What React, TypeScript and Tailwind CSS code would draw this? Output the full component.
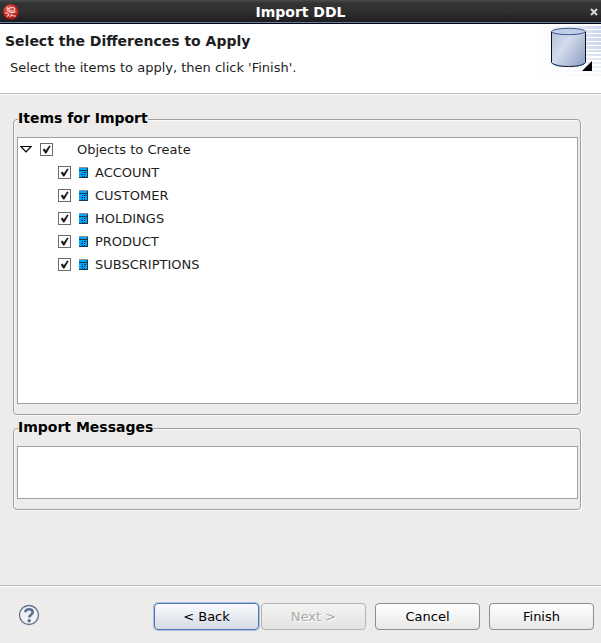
import React from "react";

const tables = ["ACCOUNT", "CUSTOMER", "HOLDINGS", "PRODUCT", "SUBSCRIPTIONS"];

function AppIcon() {
  return (
    <svg width="16" height="16" viewBox="0 0 16 16" aria-hidden="true">
      <defs>
        <radialGradient id="ball" cx="0.35" cy="0.3" r="0.8">
          <stop offset="0" stopColor="#ee6a62" />
          <stop offset="0.5" stopColor="#cf2b25" />
          <stop offset="1" stopColor="#8e120f" />
        </radialGradient>
      </defs>
      <circle cx="8" cy="8" r="7.8" fill="url(#ball)" />
      <g fill="none" stroke="#f6d5d2" strokeWidth="1.1">
        <path d="M3.500 3.500 5.500 5l2-1.500h3l1.500 1.500-1 2H5.500L4 5.500" />
        <path d="M6 7.500 9.500 9l1.500-1h2.500M2 9h2.500L6 11l-2 1.500M7 13l1.500-2 2 1h2.500" />
      </g>
    </svg>
  );
}

function DatabaseBanner() {
  const stripes = Array.from({ length: 13 }, (_, i) => 2 + i * 4);
  return (
    <svg width="66" height="69" viewBox="0 0 66 69" aria-hidden="true">
      <defs>
        <linearGradient id="fade" gradientUnits="userSpaceOnUse" x1="6" y1="0" x2="66" y2="0">
          <stop offset="0" stopColor="#cdd8ee" stopOpacity="0" />
          <stop offset="0.4" stopColor="#cdd8ee" stopOpacity="0.4" />
          <stop offset="1" stopColor="#c6d2ea" />
        </linearGradient>
        <linearGradient id="can" x1="0" y1="0" x2="1" y2="0.7">
          <stop offset="0" stopColor="#b4c0d8" />
          <stop offset="0.45" stopColor="#d3dcec" />
          <stop offset="1" stopColor="#98a8c8" />
        </linearGradient>
      </defs>
      {stripes.map((y, i) => (
        <rect
          key={y}
          x="6"
          y={y}
          width="60"
          height={i < 6 ? 3 : 2}
          fill="url(#fade)"
          opacity={i < 6 ? 0.9 : 0.9 - (i - 5) * 0.1}
        />
      ))}
      <path d="M16.500 7.500v31c1 2 7 4 17 4s16-2 17-4v-31z" fill="url(#can)" stroke="#0b1020" />
      <path d="M16.500 38.500c1 2 7 4 17 4s16-2 17-4" fill="none" stroke="#2f4e8c" strokeDasharray="10 16" />
      <ellipse cx="33.500" cy="7.500" rx="17" ry="3.200" fill="#c0cee3" stroke="#3a5890" />
      <path d="M57 37v10H47z" fill="#000" />
    </svg>
  );
}

function TableIcon() {
  return (
    <svg width="9" height="13" viewBox="0 0 9 13" shapeRendering="crispEdges" aria-hidden="true">
      <path d="M0 1h9v11H0z" fill="#00a8fb" />
      <path d="M0 1h9v1H0z" fill="#8c9298" />
      <path d="M0 4h8v1H0zM0 11h9v1H0zM8 2h1v9H8z" fill="#17384f" />
      <path d="M3 6h1v1H3zM5 6h2v1H5zM2 8h2v1H2zM5 8h1v1H5zM3 10h1v1H3zM5 10h1v1H5z" fill="#063452" />
    </svg>
  );
}

function Tick({ label }: { label: string }) {
  return (
    <span className="grid h-[13px] w-[13px] shrink-0">
      <input
        type="checkbox"
        id={label}
        defaultChecked
        className="peer col-start-1 row-start-1 h-[13px] w-[13px] appearance-none border border-[#6c6c6c] bg-white"
      />
      <svg
        viewBox="0 0 13 13"
        className="pointer-events-none invisible col-start-1 row-start-1 h-[13px] w-[13px] peer-checked:visible"
        aria-hidden="true"
      >
        <path d="M3 6.800 4.500 5.800 5.800 7.800 9.300 2.800 10.300 3.200 6.300 10.200H5.300z" fill="#161616" stroke="#161616" strokeWidth="0.500" />
      </svg>
    </span>
  );
}

function Group({ title, children }: { title: string; children: React.ReactNode }) {
  return (
    <fieldset className="min-w-0 rounded-[4px] border border-[#a09f9d] pr-[2px] pb-[10px] pl-[3px] shadow-[1px_1px_0_#fbfbfa,inset_1px_1px_0_#fbfbfa]">
      <legend className="ml-px h-5 bg-[#edeceb] text-[14px] leading-[19px] font-bold text-black">{title}</legend>
      {children}
    </fieldset>
  );
}

const button =
  "h-[27px] w-[105px] rounded-[4px] border text-[13px] leading-4";

export default function App() {
  return (
    <div className="flex min-h-screen flex-col bg-[#edeceb] font-['DejaVu_Sans',sans-serif] text-[13px] text-[#1e1e1e]">
      <div className="flex h-6 items-center border-b border-black bg-[linear-gradient(#4c4c4c_0px,#333_3px,#303030_12px,#1d1d1d_22px,#5c82b5_22px)] px-[3px]">
        <AppIcon />
        <h1 className="flex-1 pr-2 text-center text-[14px] leading-4 font-bold text-white">Import DDL</h1>
        <button type="button" aria-label="Close" className="grid h-4 w-2 place-items-center">
          <svg width="8" height="8" viewBox="0 0 8 8" aria-hidden="true">
            <path d="M1 1l6 6M7 1L1 7" stroke="#d8d8d8" strokeWidth="2" />
          </svg>
        </button>
      </div>

      <header className="flex h-[71px] justify-between border-b border-white bg-white shadow-[inset_0_-1px_0_#bdbcba]">
        <div className="pt-[9px] pl-[5px]">
          <h2 className="text-[14px] leading-4 font-bold">Select the Differences to Apply</h2>
          <p className="mt-[11px] pl-[5px] leading-4">Select the items to apply, then click 'Finish'.</p>
        </div>
        <DatabaseBanner />
      </header>

      <main className="flex flex-1 flex-col gap-[3px] pt-[14px] pr-5 pl-[13px]">
        <Group title="Items for Import">
          <div className="mt-2 h-[267px] border border-[#a09f9d] bg-white">
            <ul>
              <li>
                <div className="flex h-[23px] items-center pl-[2px]">
                  <button type="button" aria-label="Collapse Objects to Create" className="mr-2 w-3">
                    <svg width="12" height="9" viewBox="0 0 12 9" className="block" aria-hidden="true">
                      <path d="M0.800 1.500h10.400L6 7z" fill="#fff" stroke="#000" strokeWidth="1.200" />
                    </svg>
                  </button>
                  <Tick label="objects" />
                  <label htmlFor="objects" className="pl-6">Objects to Create</label>
                </div>
                <ul>
                  {tables.map((name) => (
                    <li key={name} className="flex h-[23px] items-center pl-10">
                      <Tick label={name} />
                      <label htmlFor={name} className="flex h-[23px] items-center gap-[7px] pl-2">
                        <TableIcon />
                        {name}
                      </label>
                    </li>
                  ))}
                </ul>
              </li>
            </ul>
          </div>
        </Group>
        <Group title="Import Messages">
          <textarea
            readOnly
            aria-label="Import Messages"
            className="mt-2 block h-[53px] w-full resize-none border border-[#a09f9d] bg-white"
          />
        </Group>
      </main>

      <footer className="flex h-[58px] items-center border-t border-[#bdbcba] pr-[7px] pl-[18px] shadow-[inset_0_1px_0_#fff]">
        <button type="button" aria-label="Help" className="mr-auto">
          <svg width="22" height="22" viewBox="0 0 22 22" aria-hidden="true">
            <circle cx="11" cy="11" r="9.500" fill="#f1f1f1" stroke="#5f7391" strokeWidth="1.300" />
            <path d="M7.300 8.300C7.300 4.300 14.700 4.300 14.700 8.300c0 2.500-3.400 2.500-3.400 5.200" fill="none" stroke="#5c6f93" strokeWidth="2.600" />
            <circle cx="11.200" cy="16.700" r="1.700" fill="#5c6f93" />
          </svg>
        </button>
        <div className="flex gap-[9px] pt-1">
          <div className="flex gap-[2px]">
            <button type="button" className={`${button} border-[#4f76ab] bg-linear-to-b from-[#f9fbfe] to-[#d5dae3] text-black shadow-[0_0_0_1px_#a9c3e4]`}>
              &lt; Back
            </button>
            <button type="button" disabled className={`${button} border-[#b5b4b2] bg-linear-to-b from-[#f3f3f2] to-[#e4e3e1] text-[#a9a8a6] [text-shadow:1px_1px_0_#fff]`}>
              Next &gt;
            </button>
          </div>
          <button type="button" className={`${button} border-[#8f8e8c] bg-linear-to-b from-white to-[#e9e8e7] text-black`}>
            Cancel
          </button>
          <button type="button" className={`${button} border-[#8f8e8c] bg-linear-to-b from-white to-[#e9e8e7] text-black`}>
            Finish
          </button>
        </div>
      </footer>
    </div>
  );
}
